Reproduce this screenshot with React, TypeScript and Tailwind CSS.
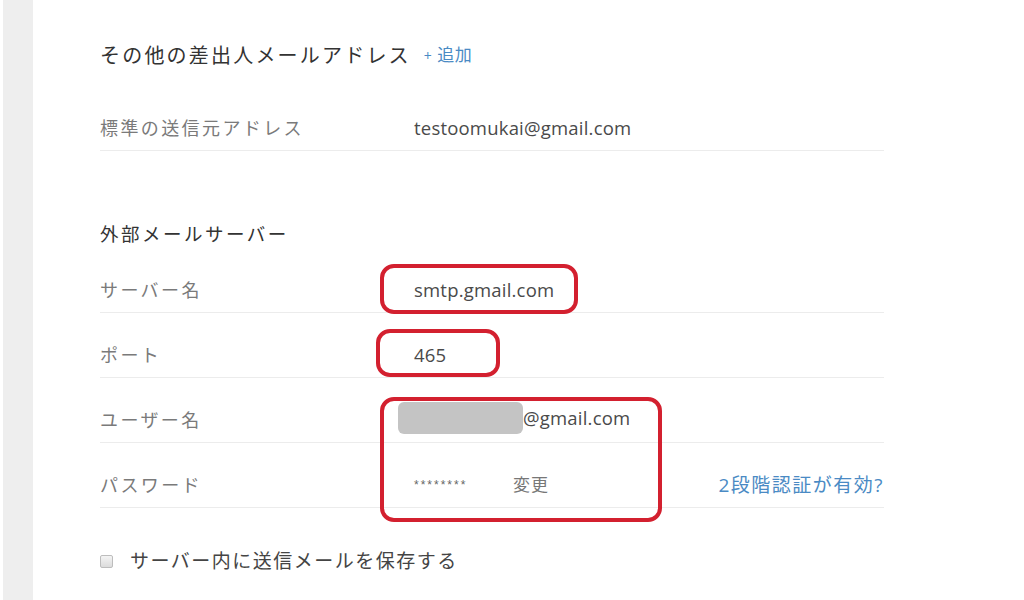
import React from "react";

const jp = { fontFamily: '"Open Sans", "Noto Sans CJK JP", sans-serif' };

function Row({
  label,
  children,
  overlay,
}: {
  label: string;
  children?: React.ReactNode;
  overlay?: React.ReactNode;
}) {
  return (
    <div className="relative flex h-[65px] items-end border-b border-[#ececec] pb-[8px]">
      <div className="w-[314px] shrink-0 text-[18px] leading-[28px] tracking-[2.4px] text-[#7a7a7a]">
        {label}
      </div>
      <div className="flex flex-1 items-center text-[18.5px] leading-[28px] tracking-[0.2px] text-[#4a4a4a]">
        {children}
      </div>
      {overlay}
    </div>
  );
}

function RedBox({ cls }: { cls: string }) {
  return (
    <div
      className={
        "pointer-events-none absolute z-10 rounded-[14px] border-[4px] border-[#d3202f] " +
        cls
      }
    />
  );
}

export default function App() {
  return (
    <div className="flex h-[600px] w-[1024px] overflow-hidden bg-white" style={jp}>
      <div className="ml-[3px] h-full w-[30px] shrink-0 bg-[#eeeeee]" />
      <div className="w-[784px] pl-[67px] pt-[41px] box-content">
        <div className="flex items-center">
          <span className="text-[20px] leading-[28px] tracking-[2.2px] text-[#333333]">
            その他の差出人メールアドレス
          </span>
          <span className="ml-[13px] text-[17px] leading-[28px] tracking-[0.5px] text-[#4a8ac4]">
            <span className="mr-[5px] text-[14px]">+</span>追加
          </span>
        </div>

        <div className="mt-[16px]">
          <Row label="標準の送信元アドレス">testoomukai@gmail.com</Row>
        </div>

        <div className="mt-[69px] text-[18.5px] leading-[28px] tracking-[2.5px] text-[#333333]">
          外部メールサーバー
        </div>

        <div>
          <Row
            label="サーバー名"
            overlay={<RedBox cls="left-[280px] top-[16px] h-[50px] w-[198px]" />}
          >
            smtp.gmail.com
          </Row>
          <Row
            label="ポート"
            overlay={<RedBox cls="left-[276px] top-[16px] h-[48px] w-[124px]" />}
          >
            465
          </Row>
          <Row
            label="ユーザー名"
            overlay={<RedBox cls="left-[280px] top-[19px] h-[125px] w-[282px]" />}
          >
            <span className="-ml-[16px] mt-[-6px] inline-block h-[32px] w-[125px] rounded-[6px] bg-[#c4c4c4]" />
            <span className="-mt-[6px]">@gmail.com</span>
          </Row>
          <Row label="パスワード">
            <span
              className="w-[99px] text-[12px] tracking-[2px] text-[#666666]"
              style={{ fontFamily: '"Liberation Sans", sans-serif' }}
            >
              ********
            </span>
            <span className="text-[17px] tracking-[1px] text-[#777777]">変更</span>
            <span className="ml-auto text-[19px] tracking-[1.5px] text-[#4a8ac4]">
              2段階認証が有効?
            </span>
          </Row>
        </div>

        <label className="mt-[39px] flex h-[28px] items-center">
          <span className="inline-block h-[13px] w-[13px] rounded-[2px] border border-[#bdbdbd] bg-gradient-to-b from-[#f4f4f4] to-[#dcdcdc]" />
          <span className="ml-[17px] text-[19px] leading-[28px] tracking-[1.5px] text-[#444444]">
            サーバー内に送信メールを保存する
          </span>
        </label>
      </div>
    </div>
  );
}
